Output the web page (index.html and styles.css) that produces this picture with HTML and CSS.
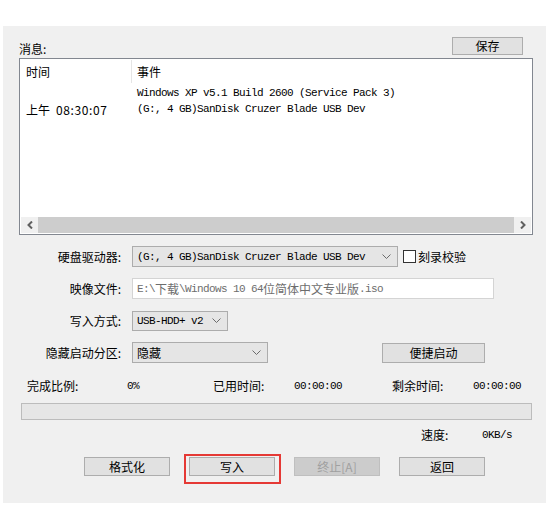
FILE: index.html
```html
<!DOCTYPE html>
<html lang="zh-CN">

<head>
  <meta charset="UTF-8">
  <meta name="viewport" content="width=device-width, initial-scale=1.0">
  <title>写入硬盘映像</title>
  <link rel="stylesheet" href="styles.css">
</head>

<body>
  <div class="window">
    <div class="log-head">
      <span class="log-title">消息:</span>
      <button class="btn btn-save">保存</button>
    </div>

    <div class="log-box">
      <div class="log-table">
        <div class="log-header">
          <div class="col-time">时间</div>
          <div class="col-sep"></div>
          <div class="col-event">事件</div>
        </div>
        <div class="log-row">
          <div class="col-time"></div>
          <div class="col-event mono">Windows XP v5.1 Build 2600 (Service Pack 3)</div>
        </div>
        <div class="log-row">
          <div class="col-time">上午<span class="time-digits">08:30:07</span></div>
          <div class="col-event mono">(G:, 4 GB)SanDisk Cruzer Blade USB Dev</div>
        </div>
      </div>
      <div class="hscroll">
        <span class="hscroll-arrow">
          <svg width="6" height="8" viewBox="0 0 6 8"><polyline points="5,0.5 1.5,4 5,7.5" fill="none" stroke="#606060" stroke-width="2"/></svg>
        </span>
        <span class="hscroll-thumb"></span>
        <span class="hscroll-arrow">
          <svg width="6" height="8" viewBox="0 0 6 8"><polyline points="1,0.5 4.5,4 1,7.5" fill="none" stroke="#606060" stroke-width="2"/></svg>
        </span>
      </div>
    </div>

    <div class="form">
      <div class="form-row">
        <span class="form-label">硬盘驱动器:</span>
        <div class="combo combo-drive">
          <span class="mono">(G:, 4 GB)SanDisk Cruzer Blade USB Dev</span>
          <svg class="combo-arrow" width="9" height="5" viewBox="0 0 9 5"><polyline points="0.5,0.5 4.5,4.5 8.5,0.5" fill="none" stroke="#6b6b6b" stroke-width="1"/></svg>
        </div>
        <label class="check"><span class="check-box"></span>刻录校验</label>
      </div>

      <div class="form-row">
        <span class="form-label">映像文件:</span>
        <div class="text-field mono">E:\<span class="cjk">下载</span>\Windows 10 64<span class="cjk">位简体中文专业版</span>.iso</div>
      </div>

      <div class="form-row">
        <span class="form-label">写入方式:</span>
        <div class="combo combo-mode">
          <span class="mono">USB-HDD+ v2</span>
          <svg class="combo-arrow" width="9" height="5" viewBox="0 0 9 5"><polyline points="0.5,0.5 4.5,4.5 8.5,0.5" fill="none" stroke="#6b6b6b" stroke-width="1"/></svg>
        </div>
      </div>

      <div class="form-row">
        <span class="form-label">隐藏启动分区:</span>
        <div class="combo combo-hide">
          <span>隐藏</span>
          <svg class="combo-arrow" width="9" height="5" viewBox="0 0 9 5"><polyline points="0.5,0.5 4.5,4.5 8.5,0.5" fill="none" stroke="#6b6b6b" stroke-width="1"/></svg>
        </div>
        <button class="btn btn-quick">便捷启动</button>
      </div>
    </div>

    <div class="stats">
      <span>完成比例:</span>
      <span class="mono">0%</span>
      <span>已用时间:</span>
      <span class="mono">00:00:00</span>
      <span>剩余时间:</span>
      <span class="mono">00:00:00</span>
    </div>

    <div class="progress"></div>

    <div class="speed">
      <span>速度:</span>
      <span class="mono">0KB/s</span>
    </div>

    <div class="actions">
      <button class="btn">格式化</button>
      <span class="highlight"><button class="btn">写入</button></span>
      <button class="btn" disabled>终止[A]</button>
      <button class="btn">返回</button>
    </div>
  </div>
</body>

</html>
```

FILE: styles.css
```css
body {
  margin: 0;
  background: #ffffff;
  font-family: 'Noto Sans CJK SC', 'Noto Sans', sans-serif;
  font-size: 12px;
  color: #000000;
}

.window {
  margin: 26px 0 0 3px;
  width: 543px;
  height: 477px;
  background-color: #f0f0f0;
  box-sizing: border-box;
  padding-top: 11px;
}

.mono {
  font-family: 'Liberation Mono', 'Noto Sans CJK SC', monospace;
  font-size: 11px;
  letter-spacing: -0.6px;
}

.cjk {
  font-family: 'Noto Sans CJK SC', sans-serif;
  font-size: 12px;
  letter-spacing: 0;
}

.time-digits {
  margin-left: 6px;
  letter-spacing: 0.6px;
}

/* botoes estilo windows */
.btn {
  font-family: 'Noto Sans CJK SC', sans-serif;
  font-size: 12px;
  line-height: 16px;
  height: 19px;
  padding: 0;
  background-color: #e1e1e1;
  border: 1px solid #adadad;
  color: #000000;
  box-sizing: border-box;
}

.btn:disabled {
  background-color: #cccccc;
  border-color: #bfbfbf;
  color: #a0a0a0;
}

.log-head {
  display: flex;
  justify-content: space-between;
  align-items: flex-end;
  padding: 0 23px 0 16px;
}

.log-title {
  line-height: 16px;
  margin-bottom: -2px;
}

.btn-save {
  width: 71px;
  height: 18px;
}

.log-box {
  margin: 3px 0 0 16px;
  width: 514px;
  height: 177px;
  box-sizing: border-box;
  border: 1px solid #828790;
  background: #ffffff;
  padding: 1px;
  display: flex;
  flex-direction: column;
}

.log-table {
  flex: 1;
}

.log-header {
  display: flex;
  align-items: center;
  height: 23px;
  margin-bottom: 2px;
}

.log-row {
  display: flex;
  align-items: center;
  height: 16px;
}

.col-time {
  width: 105px;
  padding-left: 5px;
}

.col-sep {
  width: 1px;
  height: 23px;
  background: #e5e5e5;
}

.log-header .col-event {
  padding-left: 5px;
}

.log-row .col-event {
  padding-left: 6px;
}

.hscroll {
  display: flex;
  height: 16px;
  background: #f0f0f0;
}

.hscroll-arrow {
  width: 17px;
  display: flex;
  align-items: center;
  justify-content: center;
}

.hscroll-thumb {
  flex: 1;
  background: #cdcdcd;
}

.form {
  margin-top: 3px;
}

.form-row {
  display: flex;
  align-items: center;
  height: 21px;
  margin-top: 11px;
}

.form-label {
  width: 118px;
  margin-right: 11px;
  text-align: right;
}

.combo {
  height: 21px;
  box-sizing: border-box;
  border: 1px solid #acacac;
  background: #e5e5e5;
  display: flex;
  align-items: center;
  justify-content: space-between;
  padding: 0 6px 0 4px;
}

.combo-drive {
  width: 266px;
}

.combo-mode {
  width: 96px;
  height: 20px;
}

.combo-hide {
  width: 136px;
}

.check {
  display: flex;
  align-items: center;
  margin-left: 5px;
  gap: 2px;
}

.check-box {
  width: 13px;
  height: 13px;
  box-sizing: border-box;
  border: 1px solid #333333;
  background: #ffffff;
}

.text-field {
  width: 362px;
  height: 21px;
  box-sizing: border-box;
  border: 1px solid #d4d4d4;
  background: #ffffff;
  color: #6d6d6d;
  padding-left: 4px;
  display: flex;
  align-items: center;
  white-space: pre;
}

.btn-quick {
  width: 103px;
  height: 20px;
  margin-left: 114px;
}

.stats {
  display: grid;
  grid-template-columns: 100px 86px 81px 98px 81px auto;
  align-items: center;
  line-height: 16px;
  margin: 15px 0 0 24px;
}

.progress {
  margin: 9px 0 0 18px;
  width: 511px;
  height: 17px;
  box-sizing: border-box;
  background: #e6e6e6;
  border: 1px solid #bcbcbc;
}

.speed {
  display: grid;
  grid-template-columns: 61px auto;
  align-items: center;
  line-height: 16px;
  margin: 7px 0 0 418px;
}

.actions {
  display: flex;
  gap: 19px;
  margin: 14px 0 0 81px;
}

.actions .btn {
  width: 86px;
}

.highlight {
  position: relative;
  display: flex;
}

/* moldura vermelha de destaque */
.highlight::after {
  content: '';
  position: absolute;
  top: -3px;
  left: -5px;
  right: -6px;
  bottom: -8px;
  border: 2px solid #e53935;
}
```
